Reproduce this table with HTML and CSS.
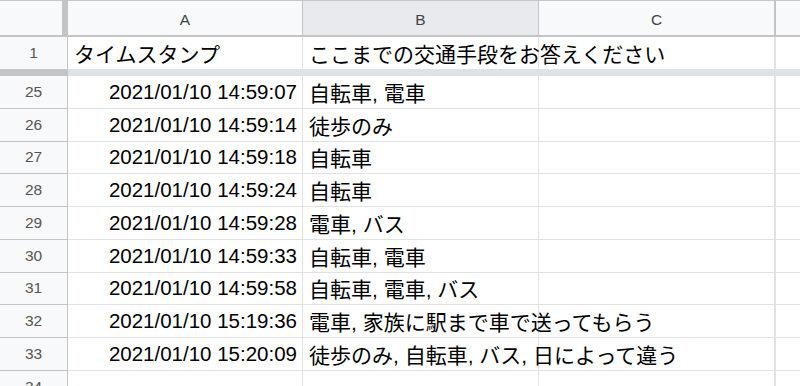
FILE: index.html
```html
<!DOCTYPE html>
<html lang="ja">
<head>
<meta charset="utf-8">
<title>Sheet</title>
<link rel="stylesheet" href="styles.css">
</head>
<body>
<div class="sheet">
  <div class="corner"></div>
  <div class="colhdr">A</div>
  <div class="colhdr sel">B</div>
  <div class="colhdr">C</div>
  <div class="colhdr last"></div>

  <div class="rowhdr">1</div>
  <div class="cell">タイムスタンプ</div>
  <div class="cell">ここまでの交通手段をお答えください</div>
  <div class="cell"></div>
  <div class="cell last"></div>

  <div class="freeze-hdr"></div>
  <div class="freeze"></div>
  <div class="freeze"></div>
  <div class="freeze"></div>
  <div class="freeze"></div>

  <div class="rowhdr">25</div>
  <div class="cell num">2021/01/10 14:59:07</div>
  <div class="cell">自転車, 電車</div>
  <div class="cell"></div>
  <div class="cell last"></div>

  <div class="rowhdr">26</div>
  <div class="cell num">2021/01/10 14:59:14</div>
  <div class="cell">徒歩のみ</div>
  <div class="cell"></div>
  <div class="cell last"></div>

  <div class="rowhdr">27</div>
  <div class="cell num">2021/01/10 14:59:18</div>
  <div class="cell">自転車</div>
  <div class="cell"></div>
  <div class="cell last"></div>

  <div class="rowhdr">28</div>
  <div class="cell num">2021/01/10 14:59:24</div>
  <div class="cell">自転車</div>
  <div class="cell"></div>
  <div class="cell last"></div>

  <div class="rowhdr">29</div>
  <div class="cell num">2021/01/10 14:59:28</div>
  <div class="cell">電車, バス</div>
  <div class="cell"></div>
  <div class="cell last"></div>

  <div class="rowhdr">30</div>
  <div class="cell num">2021/01/10 14:59:33</div>
  <div class="cell">自転車, 電車</div>
  <div class="cell"></div>
  <div class="cell last"></div>

  <div class="rowhdr">31</div>
  <div class="cell num">2021/01/10 14:59:58</div>
  <div class="cell">自転車, 電車, バス</div>
  <div class="cell"></div>
  <div class="cell last"></div>

  <div class="rowhdr">32</div>
  <div class="cell num">2021/01/10 15:19:36</div>
  <div class="cell overflow">電車, 家族に駅まで車で送ってもらう</div>
  <div class="cell"></div>
  <div class="cell last"></div>

  <div class="rowhdr">33</div>
  <div class="cell num">2021/01/10 15:20:09</div>
  <div class="cell overflow">徒歩のみ, 自転車, バス, 日によって違う</div>
  <div class="cell"></div>
  <div class="cell last"></div>

  <div class="rowhdr">34</div>
  <div class="cell num"></div>
  <div class="cell"></div>
  <div class="cell"></div>
  <div class="cell last"></div>
</div>
</body>
</html>
```

FILE: styles.css
```css
* { box-sizing: border-box; }
html, body { margin: 0; padding: 0; background: #fff; }
body {
  font-family: "Liberation Sans", Arial, "Noto Sans CJK JP", sans-serif;
  color: #000;
  overflow: hidden;
}
.sheet {
  display: grid;
  grid-template-columns: 68px 235px 236px 236px 25px;
  grid-template-rows: 37px 33px 6px repeat(10, 32.75px);
  width: 800px;
  height: 386px;
  overflow: hidden;
}
.corner {
  background: #f8f9fa;
  border-top: 1px solid #c4c7c5;
  border-right: 6px solid #c4c4c4;
  border-bottom: 2px solid #c4c4c4;
}
.colhdr {
  background: #f8f9fa;
  border-top: 1px solid #c4c7c5;
  border-right: 1px solid #c4c4c4;
  border-bottom: 2px solid #c4c4c4;
  color: #444;
  font-size: 15.5px;
  display: flex;
  align-items: center;
  justify-content: center;
  padding-top: 3px;
}
.colhdr.sel { background: #e8eaed; }
.colhdr.last { border-right: none; border-left: 1px solid #c4c4c4; }
.rowhdr {
  background: #f8f9fa;
  border-right: 1px solid #c4c4c4;
  border-bottom: 1px solid #c4c4c4;
  color: #555;
  font-size: 15.5px;
  display: flex;
  align-items: center;
  justify-content: center;
}
.cell {
  border-right: 1px solid #e2e2e2;
  border-bottom: 1px solid #e2e2e2;
  font-size: 21px;
  display: flex;
  align-items: center;
  padding: 0 5px 0 6px;
  white-space: nowrap;
  overflow: visible;
  position: relative;
}
.cell.num { justify-content: flex-end; font-size: 20.5px; }
.cell.overflow { z-index: 1; }
.cell.last { border-right: none; border-left: 1px solid #e2e2e2; }
.freeze-hdr { background: #c4c4c4; }
.freeze { background: #dde1ea; }
```
